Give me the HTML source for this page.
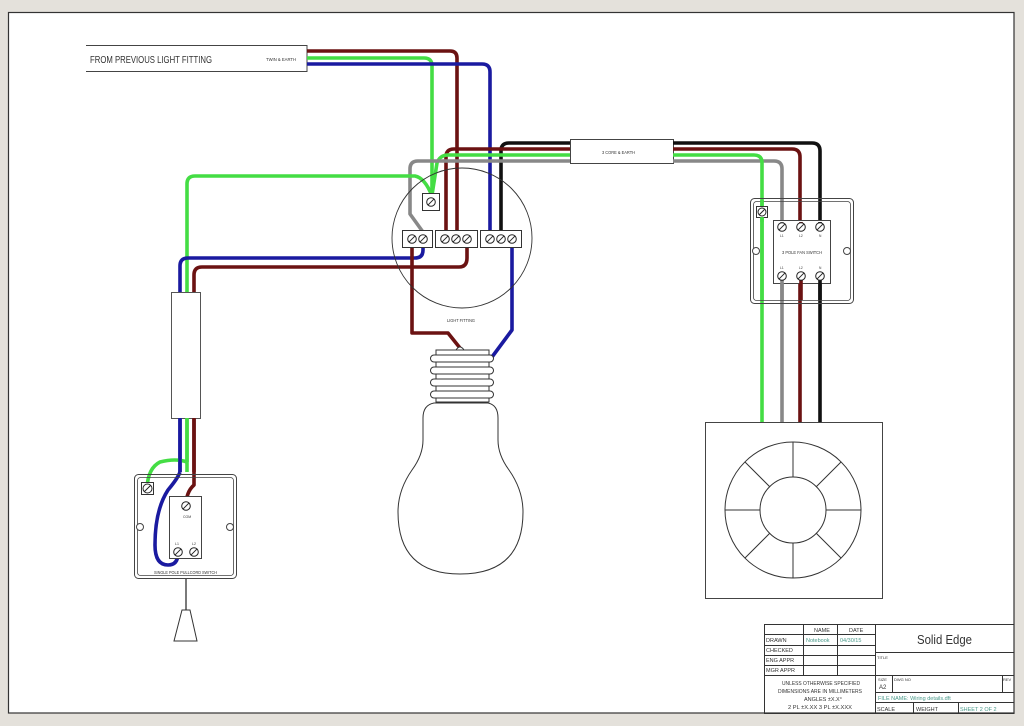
<!DOCTYPE html>
<html><head><meta charset="utf-8"><style>
html,body{margin:0;padding:0;background:#e4e1db;width:1024px;height:726px;overflow:hidden}
svg{display:block}
text{font-family:"Liberation Sans",sans-serif;fill:#333}
</style></head><body>
<svg width="1024" height="726" viewBox="0 0 1024 726" xmlns="http://www.w3.org/2000/svg">
<defs>
<g id="s"><circle cx="0" cy="0" r="4.3"/><path d="M-2.8 2.8L2.8-2.8"/></g>
</defs>
<rect x="0" y="0" width="1024" height="726" fill="#e4e1db"/>
<rect x="8.5" y="12.5" width="1005.5" height="700.5" fill="#fff" stroke="#333" stroke-width="1.2"/>

<path d="M86 45.5H307V71.5H86" fill="none" stroke="#444" stroke-width="1"/>
<text x="90" y="63" font-size="10.5" textLength="122" lengthAdjust="spacingAndGlyphs">FROM PREVIOUS LIGHT FITTING</text>
<text x="266" y="61" font-size="4.5" textLength="30" lengthAdjust="spacingAndGlyphs">TWIN &amp; EARTH</text>

<rect x="570.5" y="139.5" width="103" height="24" fill="#fff" stroke="#444" stroke-width="1"/>
<text x="602" y="154" font-size="4.5" textLength="33" lengthAdjust="spacingAndGlyphs">3 CORE &amp; EARTH</text>

<g fill="none" stroke-width="3.6" stroke-linejoin="round">
<path d="M307 51H450Q457 51 457 58V238" stroke="#6b1212"/>
<path d="M307 58H424Q432 58 432 66V195" stroke="#44dd44"/>
<path d="M307 64H482Q490 64 490 72V238" stroke="#1a1aa0"/>
<path d="M570 143H509Q501 143 501 151V238" stroke="#111"/>
<path d="M570 149H454Q446 149 446 157V238" stroke="#6b1212"/>
<path d="M570 155H448Q440 155 437 163L432 195" stroke="#44dd44"/>
<path d="M570 161H418Q410 161 410 169V214L423 232" stroke="#888"/>
<path d="M673 143H812Q820 143 820 151V422" stroke="#111"/>
<path d="M673 149H792Q800 149 800 157V422" stroke="#6b1212"/>
<path d="M673 161H774Q782 161 782 169V422" stroke="#888"/>
<path d="M673 155H754Q762 155 762 163V422" stroke="#44dd44"/>
<path d="M432 196Q425 178 415 176H195Q187 176 187 184V472" stroke="#44dd44"/>
<path d="M423 240V250Q423 258 415 258H188Q180 258 180 266V472" stroke="#1a1aa0"/>
<path d="M467 240V258Q467 267 459 267H202Q194 267 194 275V472" stroke="#6b1212"/>
<path d="M412 240V333H448L460 348" stroke="#6b1212"/>
<path d="M512 240V330L492 357" stroke="#1a1aa0"/>
<path d="M180 472Q178 478 168 490Q155 510 155 545Q155 565 168 565Q178 565 178 553" stroke="#1a1aa0"/>
<path d="M187 462Q176 458 160 462Q148 468 147 488" stroke="#44dd44"/>
<path d="M194 472V485Q186 492 186 506" stroke="#6b1212"/>
</g>

<rect x="171.5" y="292.5" width="29" height="126" fill="#fff" stroke="#555" stroke-width="1"/>
<g fill="none" stroke-width="3.6">
<path d="M180 418V472" stroke="#1a1aa0"/>
<path d="M187 418V462" stroke="#44dd44"/>
<path d="M194 418V472" stroke="#6b1212"/>
</g>

<circle cx="462" cy="238" r="70" fill="none" stroke="#333" stroke-width="0.9"/>
<text x="447" y="322" font-size="4.5" textLength="28" lengthAdjust="spacingAndGlyphs">LIGHT FITTING</text>
<g fill="#fff" stroke="#333" stroke-width="1">
<rect x="422.5" y="193.5" width="17" height="17"/>
<rect x="402.5" y="230.5" width="30" height="17"/>
<rect x="435.5" y="230.5" width="42" height="17"/>
<rect x="480.5" y="230.5" width="41" height="17"/>
</g>
<g fill="#fff" stroke="#222" stroke-width="1">
<use href="#s" x="431" y="202"/>
<use href="#s" x="412" y="239"/><use href="#s" x="423" y="239"/>
<use href="#s" x="445" y="239"/><use href="#s" x="456" y="239"/><use href="#s" x="467" y="239"/>
<use href="#s" x="490" y="239"/><use href="#s" x="501" y="239"/><use href="#s" x="512" y="239"/>
</g>

<g fill="#fff" stroke="#333" stroke-width="1">
<path d="M456 350Q460 344 464 350Z"/>
<rect x="436" y="350" width="53" height="52"/>
<rect x="430.5" y="355" width="63" height="7" rx="3.5"/>
<rect x="430.5" y="367" width="63" height="7" rx="3.5"/>
<rect x="430.5" y="379" width="63" height="7" rx="3.5"/>
<rect x="430.5" y="391" width="63" height="7" rx="3.5"/>
<path d="M434 403Q423 405 423 418V440Q423 455 412 470Q398 490 398 512Q398 574 460 574Q523 574 523 512Q523 490 509 470Q498 455 498 440V418Q498 405 488 403Z"/>
</g>

<rect x="134.5" y="474.5" width="102" height="104" rx="4" fill="none" stroke="#444" stroke-width="1"/>
<rect x="137.5" y="477.5" width="96" height="98" rx="3" fill="none" stroke="#444" stroke-width="0.8"/>
<circle cx="140" cy="527" r="3.5" fill="#fff" stroke="#444"/>
<circle cx="230" cy="527" r="3.5" fill="#fff" stroke="#444"/>
<rect x="169.5" y="496.5" width="32" height="62" fill="#fff" stroke="#444" stroke-width="1"/>
<rect x="141.5" y="482.5" width="12" height="12" fill="#fff" stroke="#333"/>
<g fill="#fff" stroke="#222" stroke-width="1">
<circle cx="147.5" cy="488.5" r="4.5"/><path d="M144.5 491.5L150.5 485.5"/>
<use href="#s" x="186" y="506"/><use href="#s" x="178" y="552"/><use href="#s" x="194" y="552"/>
</g>
<text x="183" y="518" font-size="3.5">COM</text>
<text x="175" y="545" font-size="3.5">L1</text>
<text x="192" y="545" font-size="3.5">L2</text>
<text x="154" y="574" font-size="4.8" textLength="63" lengthAdjust="spacingAndGlyphs">SINGLE POLE PULLCORD SWITCH</text>
<path d="M186 579V610" stroke="#222" stroke-width="1.2"/>
<path d="M182 610H190L197 641H174Z" fill="#fff" stroke="#333"/>

<rect x="750.5" y="198.5" width="103" height="105" rx="4" fill="none" stroke="#444" stroke-width="1"/>
<rect x="753.5" y="201.5" width="97" height="99" rx="3" fill="none" stroke="#444" stroke-width="0.8"/>
<circle cx="756" cy="251" r="3.5" fill="#fff" stroke="#444"/>
<circle cx="847" cy="251" r="3.5" fill="#fff" stroke="#444"/>
<rect x="773.5" y="220.5" width="57" height="63" fill="#fff" stroke="#444"/>
<g fill="none" stroke-width="3.6">
<path d="M782 222V226M782 276V300" stroke="#888"/>
<path d="M801 222V226M801 276V300" stroke="#6b1212"/>
<path d="M820 222V226M820 276V300" stroke="#111"/>
<path d="M762 200V300" stroke="#44dd44"/>
</g>
<rect x="756.5" y="206.5" width="11" height="11" fill="#fff" stroke="#333"/>
<g fill="#fff" stroke="#222" stroke-width="1">
<circle cx="762" cy="212" r="4"/><path d="M759 215L765 209"/>
<use href="#s" x="782" y="227"/><use href="#s" x="801" y="227"/><use href="#s" x="820" y="227"/>
<use href="#s" x="782" y="276"/><use href="#s" x="801" y="276"/><use href="#s" x="820" y="276"/>
</g>
<path d="M762 217V222" stroke="#44dd44" stroke-width="3.6"/>
<text x="780" y="237" font-size="3.3">L1</text><text x="799" y="237" font-size="3.3">L2</text><text x="819" y="237" font-size="3.3">N</text>
<text x="780" y="269" font-size="3.3">L1</text><text x="799" y="269" font-size="3.3">L2</text><text x="819" y="269" font-size="3.3">N</text>
<text x="782" y="254" font-size="4.5" textLength="40" lengthAdjust="spacingAndGlyphs">3 POLE FAN SWITCH</text>

<rect x="705.5" y="422.5" width="177" height="176" fill="#fff" stroke="#444" stroke-width="1"/>
<g fill="none" stroke="#333" stroke-width="1">
<circle cx="793" cy="510" r="68"/>
<circle cx="793" cy="510" r="33"/>
<path d="M793 442V477M793 543V578M725 510H760M826 510H861M745 462L770 487M816 533L841 558M841 462L816 487M770 533L745 558"/>
</g>

<g fill="none" stroke="#333" stroke-width="1">
<rect x="764.5" y="624.5" width="249.5" height="89"/>
<path d="M875.5 625V713M765 634.5H875M765 645.5H875M765 655.5H875M765 665.5H875M765 675.5H1014M803.5 625V675M837.5 625V675M875 652.5H1014M875 692.5H1014M875 702.5H1014M892.5 675V692M1002.5 675V692M913.5 702V713M958.5 702V713"/>
</g>
<g font-size="6">
<text x="814" y="632" font-size="5.5">NAME</text><text x="849" y="632" font-size="5.5">DATE</text>
<text x="766" y="642" font-size="5.5">DRAWN</text>
<text x="806" y="642" font-size="5.5" style="fill:#4a9a8a">Notebook</text>
<text x="840" y="642" font-size="5.5" style="fill:#4a9a8a">04/30/15</text>
<text x="766" y="652" font-size="5.5">CHECKED</text>
<text x="766" y="662" font-size="5.5">ENG APPR</text>
<text x="766" y="672" font-size="5.5">MGR APPR</text>
<text x="782" y="685" font-size="5.5" textLength="78" lengthAdjust="spacingAndGlyphs">UNLESS OTHERWISE SPECIFIED</text>
<text x="778" y="693" font-size="5.5" textLength="84" lengthAdjust="spacingAndGlyphs">DIMENSIONS ARE IN MILLIMETERS</text>
<text x="804" y="701" font-size="5.5">ANGLES ±X.X°</text>
<text x="788" y="709" font-size="5.5" textLength="64" lengthAdjust="spacingAndGlyphs">2 PL ±X.XX 3 PL ±X.XXX</text>
<text x="917" y="644" font-size="13" textLength="55" lengthAdjust="spacingAndGlyphs">Solid Edge</text>
<text x="877" y="659" font-size="4">TITLE</text>
<text x="878" y="681" font-size="4">SIZE</text><text x="879" y="689" font-size="6">A2</text>
<text x="894" y="681" font-size="4">DWG NO</text>
<text x="1003" y="681" font-size="4">REV</text>
<text x="878" y="700" font-size="5.5" style="fill:#4a9a8a">FILE NAME: Wiring details.dft</text>
<text x="877" y="711" font-size="5.5">SCALE</text>
<text x="916" y="711" font-size="5.5">WEIGHT</text>
<text x="960" y="711" font-size="5.5" style="fill:#4a9a8a">SHEET 2 OF 2</text>
</g>
</svg>
</body></html>
